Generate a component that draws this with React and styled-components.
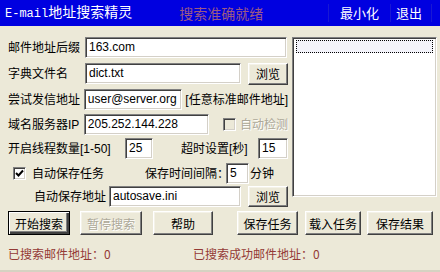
import React from "react";
import styled, { createGlobalStyle, css } from "styled-components";

const Global = createGlobalStyle`
  html, body { margin: 0; padding: 0; background: #ECE9D8; }
  * { box-sizing: border-box; }
`;

const FONT = `"Liberation Sans", "Noto Sans CJK SC", sans-serif`;

const Window = styled.div`
  width: 440px;
  height: 272px;
  background: #ECE9D8;
  display: flex;
  flex-direction: column;
  font-family: ${FONT};
  font-size: 12px;
  color: #000;
  overflow: hidden;
  border-bottom: 2px solid #d6d2c2;
`;

const TitleBar = styled.div`
  height: 26px;
  flex: none;
  background: #0000e0;
  display: flex;
  align-items: center;
  padding-left: 5px;
`;

const Title = styled.div`
  color: #fff;
  font-family: "Liberation Mono", "Noto Sans CJK SC", monospace;
  font-size: 14px;
  line-height: 26px;
  white-space: nowrap;
  span { font-size: 12px; letter-spacing: 0; }
`;

const Ready = styled.div`
  margin-left: 47px;
  color: #9c5a84;
  font-family: "Noto Sans CJK SC", sans-serif;
  font-size: 14px;
  line-height: 26px;
  white-space: nowrap;
`;

const WinButtons = styled.div`
  margin-left: auto;
  margin-right: 8px;
  display: flex;
  align-items: center;
  border-left: 1px solid #1818d4;
`;

const WinButton = styled.div`
  color: #fff;
  font-family: "Noto Sans CJK SC", sans-serif;
  font-size: 13px;
  line-height: 18px;
  padding: 0 ${(p) => p.$pr}px 0 ${(p) => p.$pl}px;
  border-right: 1px solid #1818d4;
`;

const Body = styled.div`
  display: flex;
  padding: 11px 0 0 8px;
`;

const Form = styled.div`
  width: 280px;
  display: flex;
  flex-direction: column;
`;

const Row = styled.div`
  display: flex;
  align-items: center;
  height: 21px;
  margin-top: ${(p) => p.$mt || 0}px;
  padding-left: ${(p) => p.$pl || 0}px;
`;

const Label = styled.div`
  width: ${(p) => (p.$w ? `${p.$w}px` : "auto")};
  margin-left: ${(p) => p.$ml || 0}px;
  white-space: nowrap;
  line-height: 16px;
  ${(p) =>
    p.$disabled &&
    css`
      color: #aca899;
      text-shadow: 1px 1px 0 #fff;
    `}
`;

const sunken = css`
  border-top: 1px solid #808080;
  border-left: 1px solid #808080;
  border-bottom: 1px solid #fff;
  border-right: 1px solid #fff;
  box-shadow: inset 1px 1px 0 #404040, inset -1px -1px 0 #d4d0c8;
`;

const Input = styled.div`
  ${sunken};
  width: ${(p) => p.$w}px;
  height: 21px;
  margin-left: ${(p) => p.$ml || 0}px;
  background: #fff;
  font-family: "Liberation Sans", sans-serif;
  font-size: 12px;
  line-height: 19px;
  padding-left: 3px;
  white-space: nowrap;
  overflow: hidden;
`;

const raised = css`
  border-top: 1px solid #fff;
  border-left: 1px solid #fff;
  border-bottom: 1px solid #404040;
  border-right: 1px solid #404040;
  box-shadow: inset -1px -1px 0 #808080, inset 1px 1px 0 #f4f2e8;
`;

const Button = styled.div`
  ${raised};
  width: ${(p) => p.$w}px;
  height: ${(p) => p.$h || 24}px;
  margin-left: ${(p) => p.$ml || 0}px;
  background: #ECE9D8;
  display: flex;
  align-items: center;
  justify-content: center;
  font-family: "Noto Sans CJK SC", sans-serif;
  font-size: 12px;
  white-space: nowrap;
  ${(p) =>
    p.$default &&
    css`
      outline: 1px solid #000;
      outline-offset: -1px;
      box-shadow: inset 1px 1px 0 #fff, inset -2px -2px 0 #404040,
        inset -3px -3px 0 #808080;
      border-color: #000;
    `}
  ${(p) =>
    p.$disabled &&
    css`
      color: #aca899;
      text-shadow: 1px 1px 0 #fff;
    `}
`;

const Check = styled.div`
  ${sunken};
  width: 13px;
  height: 13px;
  flex: none;
  margin-left: ${(p) => p.$ml || 0}px;
  margin-right: ${(p) => p.$mr || 4}px;
  background: ${(p) => (p.$disabled ? "#ECE9D8" : "#fff")};
  display: flex;
  align-items: center;
  justify-content: center;
`;

const ListBox = styled.div`
  ${sunken};
  width: 145px;
  height: 160px;
  margin-left: 4px;
  background: #fff;
  padding: 2px 3px 0 3px;
`;

const FocusItem = styled.div`
  height: 13px;
  border: 1px dotted #000;
  background: #f3f3fa;
`;

const ButtonRow = styled.div`
  display: flex;
  align-items: center;
  padding-left: 8px;
  margin-top: 4px;
`;

const StatusRow = styled.div`
  display: flex;
  align-items: center;
  padding-left: 8px;
  margin-top: 10px;
  color: #943a36;
  font-family: "Noto Sans CJK SC", sans-serif;
  font-size: 12px;
  line-height: 18px;
`;

const StatusItem = styled.div`
  width: ${(p) => p.$w}px;
  white-space: nowrap;
`;

const CheckMark = () => (
  <svg width="9" height="9" viewBox="0 0 9 9">
    <path d="M1 4 L3.5 6.5 L8 1.5" fill="none" stroke="#000" strokeWidth="2" />
  </svg>
);

export default function App() {
  return (
    <>
      <Global />
      <Window>
        <TitleBar>
          <Title>
            <span>E-mail</span>地址搜索精灵
          </Title>
          <Ready>搜索准确就绪</Ready>
          <WinButtons>
            <WinButton $pl={11} $pr={11}>最小化</WinButton>
            <WinButton $pl={5} $pr={9}>退出</WinButton>
          </WinButtons>
        </TitleBar>
        <Body>
          <Form>
            <Row>
              <Label $w={77}>邮件地址后缀</Label>
              <Input $w={202}>163.com</Input>
            </Row>
            <Row $mt={5}>
              <Label $w={77}>字典文件名</Label>
              <Input $w={156}>dict.txt</Input>
              <Button $w={40} $h={22} $ml={7}>浏览</Button>
            </Row>
            <Row $mt={5}>
              <Label $w={77}>尝试发信地址</Label>
              <Input $w={100}>user@server.org</Input>
              <Label $ml={3}>[任意标准邮件地址]</Label>
            </Row>
            <Row $mt={4}>
              <Label $w={77}>域名服务器IP</Label>
              <Input $w={127}>205.252.144.228</Input>
              <Check $ml={14} $disabled />
              <Label $disabled>自动检测</Label>
            </Row>
            <Row $mt={3}>
              <Label $w={117}>开启线程数量[1-50]</Label>
              <Input $w={28}>25</Input>
              <Label $w={77} $ml={28}>超时设置[秒]</Label>
              <Input $w={30}>15</Input>
            </Row>
            <Row $mt={4} $pl={5}>
              <Check $mr={6}>
                <CheckMark />
              </Check>
              <Label $w={113}>自动保存任务</Label>
              <Label $w={81}>保存时间间隔：</Label>
              <Input $w={23}>5</Input>
              <Label $ml={1}>分钟</Label>
            </Row>
            <Row $mt={2} $pl={26}>
              <Label $w={75}>自动保存地址</Label>
              <Input $w={132}>autosave.ini</Input>
              <Button $w={40} $h={21} $ml={7}>浏览</Button>
            </Row>
          </Form>
          <ListBox>
            <FocusItem />
          </ListBox>
        </Body>
        <ButtonRow>
          <Button $w={62} $default>开始搜索</Button>
          <Button $w={62} $ml={10} $disabled>暂停搜索</Button>
          <Button $w={60} $ml={11}>帮助</Button>
          <Button $w={61} $ml={24}>保存任务</Button>
          <Button $w={56} $ml={7}>载入任务</Button>
          <Button $w={66} $ml={6}>保存结果</Button>
        </ButtonRow>
        <StatusRow>
          <StatusItem $w={185}>已搜索邮件地址：0</StatusItem>
          <StatusItem $w={200}>已搜索成功邮件地址：0</StatusItem>
        </StatusRow>
      </Window>
    </>
  );
}
